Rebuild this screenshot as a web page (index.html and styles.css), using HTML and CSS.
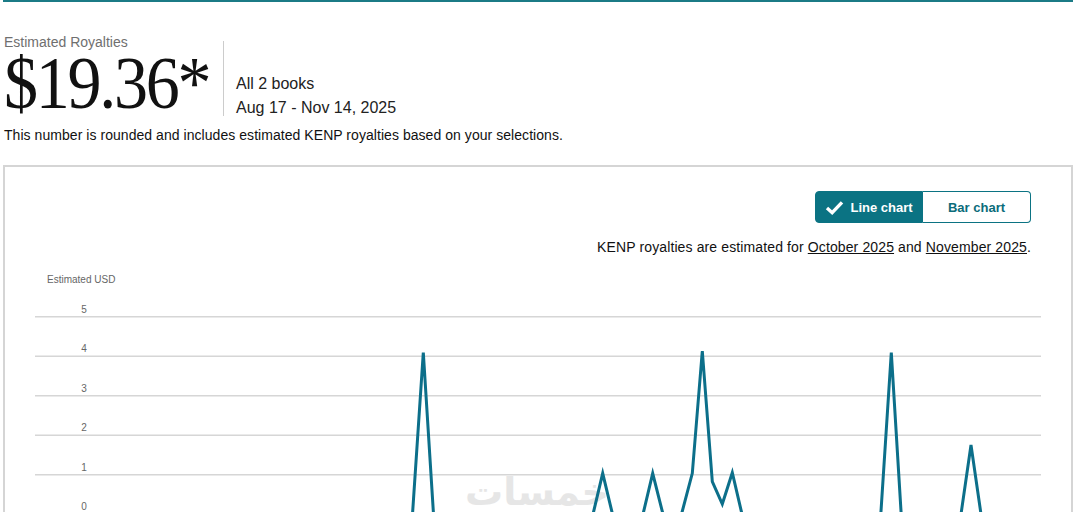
FILE: index.html
```html
<!DOCTYPE html>
<html lang="en">
<head>
    <meta charset="UTF-8">
    <meta name="viewport" content="width=device-width, initial-scale=1.0">
    <title>Estimated Royalties</title>
    <link rel="stylesheet" href="styles.css">
</head>
<body>
    <div class="topbar"></div>

    <div class="summary">
        <div class="total">
            <div class="total-label">Estimated Royalties</div>
            <div class="total-value"><span>$19.36*</span></div>
        </div>
        <div class="divider"></div>
        <div class="meta">
            <div>All 2 books</div>
            <div>Aug 17 - Nov 14, 2025</div>
        </div>
    </div>
    <p class="note">This number is rounded and includes estimated KENP royalties based on your selections.</p>

    <div class="card">
        <div class="toggle">
            <button class="toggle-btn active">
                <svg class="check" viewBox="0 0 20 16" width="19" height="15">
                    <path d="M2 8.5 L7.5 13.5 L18 2.5" fill="none" stroke="#fff" stroke-width="3.6"/>
                </svg>
                Line chart
            </button>
            <button class="toggle-btn">Bar chart</button>
        </div>
        <p class="kenp">KENP royalties are estimated for <a href="#">October 2025</a> and <a href="#">November 2025</a>.</p>

        <svg class="chart" viewBox="5 262 1066 260" width="1066" height="260">
            <text class="axis-title" x="47" y="282.5">Estimated USD</text>
            <g class="grid">
                <line x1="35" x2="1041" y1="316.7" y2="316.7"/>
                <line x1="35" x2="1041" y1="356.2" y2="356.2"/>
                <line x1="35" x2="1041" y1="395.7" y2="395.7"/>
                <line x1="35" x2="1041" y1="435.2" y2="435.2"/>
                <line x1="35" x2="1041" y1="474.7" y2="474.7"/>
                <line x1="35" x2="1041" y1="514.2" y2="514.2"/>
            </g>
            <g class="ticks">
                <text x="84" y="312.5">5</text>
                <text x="84" y="352">4</text>
                <text x="84" y="391.5">3</text>
                <text x="84" y="431">2</text>
                <text x="84" y="470.5">1</text>
                <text x="84" y="510">0</text>
            </g>
            <text class="watermark" x="537" y="505">خمسات</text>
            <polyline class="series" points="40,514.2 412.5,514.2 423.3,352.5 433.5,514.2 593,514.2 602.7,473.3 612.5,514.2 643,514.2 652.7,473.3 663,514.2 681.5,514.2 692.3,473.3 702.3,351 712.3,481.7 722.3,504 732.3,472.7 742,514.2 880.8,514.2 891.3,352.5 901.2,514.2 961,514.2 971,445 981,514.2 1040,514.2"/>
        </svg>
    </div>
</body>
</html>
```

FILE: styles.css
```css
body {
    margin: 0 0 0 3px;
    font-family: "Liberation Sans", Arial, sans-serif;
    color: #111;
    background: #fff;
}
.topbar {
    height: 2px;
    margin-left: -3px;
    background-color: #1b7b86;
}
.summary {
    display: flex;
    align-items: flex-end;
    margin-top: 30px;
    padding-left: 1px;
}
.total {
    width: 219px;
    padding-bottom: 9px;
}
.total-label {
    font-size: 14px;
    line-height: 20px;
    color: #6f6f6f;
}
.total-value {
    margin-top: 3px;
    font-family: "Liberation Serif", "Times New Roman", serif;
    font-size: 74px;
    line-height: 56px;
    color: #111;
}
.total-value span {
    display: inline-block;
    letter-spacing: -2.5px;
    transform: scaleX(0.92);
    transform-origin: left center;
}
.divider {
    width: 1px;
    height: 75px;
    margin-bottom: 4px;
    background-color: #cccccc;
}
.meta {
    margin-left: 12px;
    font-size: 16px;
    line-height: 24px;
    color: #222;
}
.note {
    margin: 5px 0 0 1px;
    font-size: 14px;
    line-height: 20px;
    letter-spacing: 0.05px;
}
.card {
    margin-top: 20px;
    border: 2px solid #d5d5d5;
    padding: 24px 40px 0 0;
    height: 400px;
}
.toggle {
    display: flex;
    justify-content: flex-end;
}
.toggle-btn {
    display: flex;
    align-items: center;
    justify-content: center;
    gap: 6px;
    width: 108px;
    height: 32px;
    padding: 0;
    font-family: "Liberation Sans", Arial, sans-serif;
    font-size: 13px;
    font-weight: bold;
    color: #0b6c7a;
    background: #fff;
    border: 1px solid #0b7383;
    border-left: none;
    border-radius: 0 4px 4px 0;
    cursor: pointer;
}
.toggle-btn.active {
    color: #fff;
    background-color: #0b7383;
    border: 1px solid #0b7383;
    border-radius: 4px 0 0 4px;
}
.kenp {
    margin: 14px 0 0;
    font-size: 14px;
    line-height: 20px;
    letter-spacing: 0.12px;
    text-align: right;
    color: #111;
}
.kenp a {
    color: #111;
    text-decoration: underline;
}
.chart {
    display: block;
    margin-top: 5px;
    margin-right: -40px;
}
.grid line {
    stroke: #d6d6d6;
    stroke-width: 1.5;
}
.axis-title, .ticks text {
    font-family: "Liberation Sans", Arial, sans-serif;
    font-size: 10px;
    fill: #666;
}
.ticks text {
    text-anchor: middle;
}
.watermark {
    font-family: "DejaVu Sans", "Noto Sans", sans-serif;
    font-size: 38px;
    font-weight: bold;
    fill: #e6e6e6;
    text-anchor: middle;
}
.series {
    fill: none;
    stroke: #0c6f8a;
    stroke-width: 3;
    stroke-linejoin: miter;
    stroke-miterlimit: 6;
}
```
